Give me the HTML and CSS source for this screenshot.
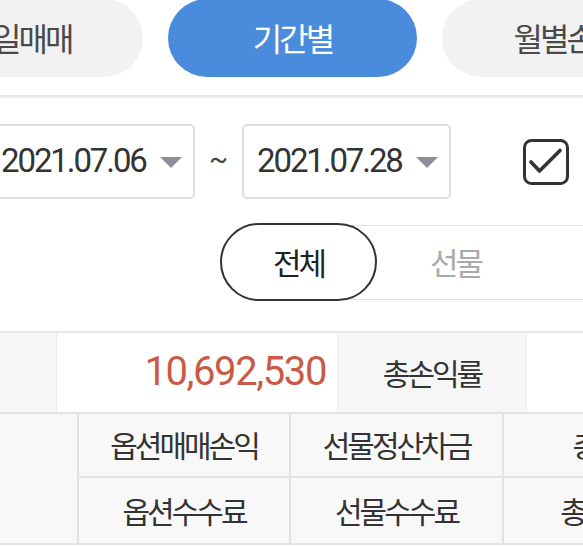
FILE: index.html
```html
<!DOCTYPE html>
<html lang="ko">
<head>
<meta charset="utf-8">
<link rel="stylesheet" href="styles.css">
</head>
<body>
<div class="page">
  <nav class="tabs">
    <div class="tab">당일매매</div>
    <div class="tab active">기간별</div>
    <div class="tab">월별손익</div>
  </nav>
  <div class="divider"></div>

  <div class="date-row">
    <div class="select"><span class="date">2021.07.06</span><svg class="arrow" width="22" height="11" viewBox="0 0 22 11"><polygon points="0,0 22,0 11,11" fill="#8e8e9a"/></svg></div>
    <div class="tilde">~</div>
    <div class="select"><span class="date">2021.07.28</span><svg class="arrow" width="22" height="11" viewBox="0 0 22 11"><polygon points="0,0 22,0 11,11" fill="#8e8e9a"/></svg></div>
    <svg class="check" width="46" height="46" viewBox="0 0 46 46"><rect x="1.5" y="1.5" width="43" height="43" rx="7" fill="#fff" stroke="#333" stroke-width="3"/><path d="M8 23 L16.5 32 L37 11.5" fill="none" stroke="#333" stroke-width="3.6" stroke-linecap="round" stroke-linejoin="round"/></svg>
    <span class="check-label">미결제</span>
  </div>

  <div class="seg-wrap">
    <div class="seg">
      <div class="seg-item on">전체</div>
      <div class="seg-item">선물</div>
      <div class="seg-item">옵션</div>
    </div>
  </div>

  <div class="table">
    <div class="row1">
      <div class="c head"></div>
      <div class="c val"><span class="num">10,692,530</span></div>
      <div class="c head"><span class="kr">총손익률</span></div>
      <div class="c val"></div>
    </div>
    <div class="row2">
      <div class="c side"></div>
      <div class="c sub"><span class="kr">옵션매매손익</span></div>
      <div class="c sub"><span class="kr">선물정산차금</span></div>
      <div class="c sub"><span class="kr">총손익</span></div>
      <div class="c sub"><span class="kr">옵션수수료</span></div>
      <div class="c sub"><span class="kr">선물수수료</span></div>
      <div class="c sub"><span class="kr">총수수료</span></div>
    </div>
  </div>
</div>
</body>
</html>
```

FILE: styles.css
```css
html, body {
  margin: 0;
  padding: 0;
  background: #fff;
}
body {
  width: 583px;
  height: 547px;
  overflow: hidden;
  font-family: Roboto, "Noto Sans CJK KR", sans-serif;
  color: #333;
}
.page {
  width: 583px;
}

/* tabs */
.tabs {
  display: flex;
  gap: 25px;
  margin-left: -106px;
  margin-top: -1px;
  width: 850px;
}
.tab {
  flex: 0 0 249px;
  height: 78px;
  border-radius: 39px;
  background: #f2f2f2;
  color: #4a4a4a;
  display: flex;
  align-items: center;
  justify-content: center;
  font-family: "Noto Sans CJK KR", sans-serif;
  font-size: 32px;
  letter-spacing: -3px;
  padding-bottom: 2px;
  box-sizing: border-box;
}
.tab.active {
  background: #4b8bdb;
  color: #fff;
}
.divider {
  height: 3px;
  background: #e9e9e9;
  margin-top: 18px;
}

/* date row */
.date-row {
  display: flex;
  align-items: center;
  margin-top: 26px;
  margin-left: -14px;
  width: 700px;
}
.select {
  flex: 0 0 209px;
  height: 75px;
  box-sizing: border-box;
  border: 2px solid #dedede;
  border-radius: 5px;
  display: flex;
  align-items: center;
  justify-content: space-between;
  padding: 0 11px 0 13px;
}
.date {
  font-size: 33px;
  letter-spacing: -2.1px;
  color: #333;
  padding-bottom: 2px;
}
.arrow {
  display: block;
  margin-top: 1px;
}
.tilde {
  flex: 0 0 47px;
  text-align: center;
  font-size: 28px;
  color: #444;
  padding-bottom: 6px;
}
.check {
  display: block;
  margin-left: 72px;
  flex: 0 0 46px;
}
.check-label {
  margin-left: 12px;
  font-family: "Noto Sans CJK KR", sans-serif;
  font-size: 28px;
  color: #333;
}

/* segmented */
.seg-wrap {
  margin-top: 24px;
  height: 78px;
  display: flex;
  align-items: center;
  padding-left: 220px;
}
.seg {
  display: flex;
  align-items: center;
  height: 75px;
  box-sizing: border-box;
  border: 1px solid #e0e0e0;
  border-right: none;
  border-radius: 38px 0 0 38px;
  width: 600px;
  flex: 0 0 600px;
}
.seg-item {
  flex: 0 0 157px;
  height: 75px;
  display: flex;
  align-items: center;
  justify-content: center;
  font-family: "Noto Sans CJK KR", sans-serif;
  font-size: 31px;
  letter-spacing: -3px;
  color: #aaa;
  box-sizing: border-box;
  padding-bottom: 2px;
}
.seg-item.on {
  height: 78px;
  margin-left: -1px;
  border: 2px solid #333;
  border-radius: 39px;
  background: #fff;
  color: #222;
}

/* table */
.table {
  margin-top: 30px;
  border-top: 2px solid #e6e6e6;
  width: 800px;
}
.row1 {
  display: grid;
  grid-template-columns: 57px 281px 189px 273px;
  height: 79px;
  border-bottom: 2px solid #e3e3e3;
}
.row2 {
  display: grid;
  grid-template-columns: 79px 212px 213px 213px;
  grid-template-rows: 64px 65px;
  border-bottom: 2px solid #e3e3e3;
  background: #f8f8f8;
}
.c {
  display: flex;
  align-items: center;
  justify-content: center;
  box-sizing: border-box;
  border-right: 1px solid #ededed;
}
.row1 .head {
  background: #f6f6f6;
}
.row1 .val {
  background: #fff;
  justify-content: flex-end;
  padding-right: 11px;
}
.num {
  font-size: 40px;
  letter-spacing: -1.4px;
  color: #c95a45;
  padding-bottom: 3px;
}
.kr {
  font-family: "Noto Sans CJK KR", sans-serif;
  font-size: 30px;
  letter-spacing: -3px;
  color: #333;
  padding-bottom: 2px;
}
.row2 .side {
  grid-row: span 2;
  border-right: 2px solid #e3e3e3;
}
.row2 .sub {
  border-right: 2px solid #e3e3e3;
}
.row2 .sub:nth-child(-n+4) {
  border-bottom: 2px solid #e3e3e3;
}
```
